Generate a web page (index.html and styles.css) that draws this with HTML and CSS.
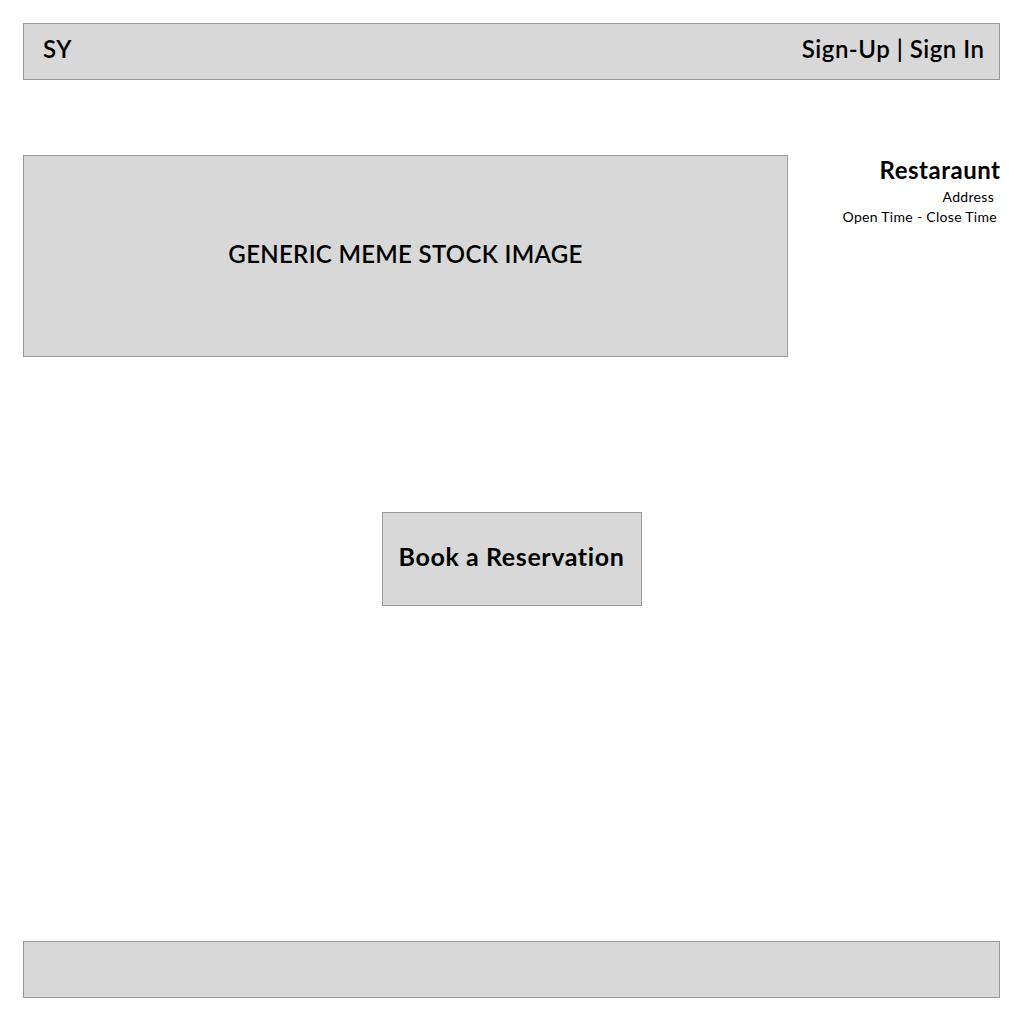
FILE: index.html
```html
<!DOCTYPE html>
<html lang="en">
<head>
  <meta charset="UTF-8">
  <title>SY Restaurant</title>
  <link rel="stylesheet" href="styles.css">
</head>
<body>

  <header class="topbar">
    <div class="logo">SY</div>
    <nav class="auth">Sign-Up | Sign In</nav>
  </header>

  <section class="hero">
    <div class="hero-image">GENERIC MEME STOCK IMAGE</div>
    <div class="info">
      <h2 class="info-name">Restaraunt</h2>
      <p class="info-address">Address</p>
      <p class="info-hours">Open Time - Close Time</p>
    </div>
  </section>

  <div class="actions">
    <button class="book-btn">Book a Reservation</button>
  </div>

  <footer class="bottombar"></footer>

</body>
</html>
```

FILE: styles.css
```css
* {
  box-sizing: border-box;
}

body {
  margin: 0;
  padding: 23px 24px 0 23px;
  font-family: Lato, 'Noto Sans', sans-serif;
  color: #000;
  background: #fff;
}

.topbar {
  height: 57px;
  background-color: #d8d8d8;
  border: 1px solid #999;
  display: flex;
  align-items: center;
  justify-content: space-between;
  padding: 0 15px 6px 19px;
  font-size: 24px;
  font-weight: 600;
  letter-spacing: 0.5px;
}

.auth {
  margin-right: -0.5px;
}

.hero {
  display: flex;
  margin-top: 75px;
}

.hero-image {
  width: 765px;
  height: 202px;
  background-color: #d8d8d8;
  border: 1px solid #999;
  display: flex;
  align-items: center;
  justify-content: center;
  font-size: 24px;
  font-weight: 600;
  letter-spacing: 0.3px;
  padding-bottom: 6px;
}

.info {
  flex: 1;
  text-align: right;
  padding-top: 1px;
}

.info-name {
  margin: 0 -0.5px 3px 0;
  font-size: 24px;
  font-weight: 700;
  line-height: 28px;
  letter-spacing: 0.5px;
}

.info-address,
.info-hours {
  margin: 0;
  font-size: 14px;
  line-height: 20px;
  letter-spacing: 0.3px;
}

.info-address {
  padding-right: 6px;
}

.info-hours {
  padding-right: 3px;
}

.actions {
  display: flex;
  justify-content: center;
  margin-top: 155px;
}

.book-btn {
  width: 260px;
  height: 94px;
  background-color: #d8d8d8;
  border: 1px solid #999;
  font-family: inherit;
  font-size: 25px;
  font-weight: 700;
  letter-spacing: 0.6px;
  color: #000;
  padding: 0 0 6px;
}

.bottombar {
  height: 57px;
  margin-top: 335px;
  background-color: #d8d8d8;
  border: 1px solid #999;
}
```
